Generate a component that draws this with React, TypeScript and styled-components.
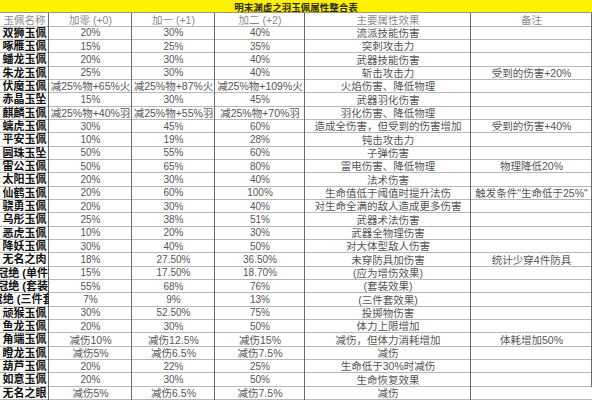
import styled, { createGlobalStyle } from 'styled-components';

const Global = createGlobalStyle`
  html, body { margin: 0; padding: 0; background: #fff; }
  body { font-family: "Liberation Sans", "Noto Sans CJK SC", sans-serif; }
`;

const Sheet = styled.div`
  width: 592px;
  height: 400px;
  overflow: hidden;
  display: grid;
  grid-template-columns: 49px 83px 83px 90px 166px 1fr;
  grid-auto-rows: calc(400px / 30);
`;

const Title = styled.div`
  grid-column: 1 / -1;
  background: #fff200;
  color: #2a2a2a;
  font-weight: 700;
  font-size: 9.5px;
  display: flex;
  align-items: center;
  justify-content: center;
  box-shadow: inset 0 -1px #9a9a6a;
`;

const Cell = styled.div<{ $kind?: 'name' | 'num' | 'text' | 'head' }>`
  box-shadow: inset -1px 0 #6a6a6a, inset 0 -1px #b8b8b8;
  display: flex;
  align-items: center;
  justify-content: center;
  overflow-x: clip;
  overflow-y: visible;
  white-space: nowrap;
  line-height: 1;
  color: ${(p) =>
    p.$kind === 'name' ? '#111' : p.$kind === 'head' ? '#8a8a8a' : '#555'};
  font-weight: ${(p) => (p.$kind === 'name' ? 700 : 400)};
  font-size: ${(p) =>
    p.$kind === 'num' ? '10px' : p.$kind === 'name' ? '11px' : '10.5px'};
  &:last-child {
    box-shadow: inset 0 -1px #b8b8b8;
  }
`;

type Row = [string, string, string, string, string, string];

const rows: Row[] = [
  ['双狮玉佩', '20%', '30%', '40%', '流派技能伤害', ''],
  ['啄雁玉佩', '15%', '25%', '35%', '突刺攻击力', ''],
  ['蟠龙玉佩', '20%', '30%', '40%', '武器技能伤害', ''],
  ['朱龙玉佩', '25%', '30%', '40%', '斩击攻击力', '受到的伤害+20%'],
  ['伏魔玉佩', '减25%物+65%火', '减25%物+87%火', '减25%物+109%火', '火焰伤害、降低物理', ''],
  ['赤晶玉坠', '15%', '30%', '45%', '武器羽化伤害', ''],
  ['麒麟玉佩', '减25%物+40%羽', '减25%物+55%羽', '减25%物+70%羽', '羽化伤害、降低物理', ''],
  ['螭虎玉佩', '30%', '45%', '60%', '造成全伤害，但受到的伤害增加', '受到的伤害+40%'],
  ['平安玉佩', '10%', '19%', '28%', '钝击攻击力', ''],
  ['圆珠玉坠', '50%', '55%', '60%', '子弹伤害', ''],
  ['雷公玉佩', '50%', '65%', '80%', '雷电伤害、降低物理', '物理降低20%'],
  ['太阳玉佩', '20%', '30%', '40%', '法术伤害', ''],
  ['仙鹤玉佩', '20%', '60%', '100%', '生命值低于阈值时提升法伤', '触发条件"生命低于25%"'],
  ['骁勇玉佩', '20%', '30%', '40%', '对生命全满的敌人造成更多伤害', ''],
  ['乌彤玉佩', '25%', '38%', '51%', '武器术法伤害', ''],
  ['恶虎玉佩', '10%', '20%', '30%', '武器全物理伤害', ''],
  ['降妖玉佩', '30%', '40%', '50%', '对大体型敌人伤害', ''],
  ['无名之肉', '18%', '27.50%', '36.50%', '未穿防具加伤害', '统计少穿4件防具'],
  ['冠绝 (单件)', '15%', '17.50%', '18.70%', '(应为增伤效果)', ''],
  ['冠绝 (套装)', '55%', '68%', '76%', '(套装效果)', ''],
  ['冠绝 (三件套)', '7%', '9%', '13%', '(三件套效果)', ''],
  ['顽猴玉佩', '30%', '52.50%', '75%', '投掷物伤害', ''],
  ['鱼龙玉佩', '20%', '30%', '50%', '体力上限增加', ''],
  ['角端玉佩', '减伤10%', '减伤12.5%', '减伤15%', '减伤，但体力消耗增加', '体耗增加50%'],
  ['瞪龙玉佩', '减伤5%', '减伤6.5%', '减伤7.5%', '减伤', ''],
  ['葫芦玉佩', '20%', '22%', '25%', '生命低于30%时减伤', ''],
  ['如意玉佩', '20%', '30%', '50%', '生命恢复效果', ''],
  ['无名之眼', '减伤5%', '减伤6.5%', '减伤7.5%', '减伤', ''],
];

const heads = ['玉佩名称', '加零 (+0)', '加一 (+1)', '加二 (+2)', '主要属性效果', '备注'];

const kindOf = (v: string) => (/[\u4e00-\u9fff]/.test(v) ? 'text' : 'num');

export default function App() {
  return (
    <>
      <Global />
      <Sheet>
        <Title>明末渊虚之羽玉佩属性整合表</Title>
        {heads.map((h) => (
          <Cell key={h} $kind="head">{h}</Cell>
        ))}
        {rows.map((r) =>
          r.map((v, i) => (
            <Cell key={r[0] + i} $kind={i === 0 ? 'name' : i >= 4 ? 'text' : kindOf(v)}>
              {v}
            </Cell>
          ))
        )}
      </Sheet>
    </>
  );
}
